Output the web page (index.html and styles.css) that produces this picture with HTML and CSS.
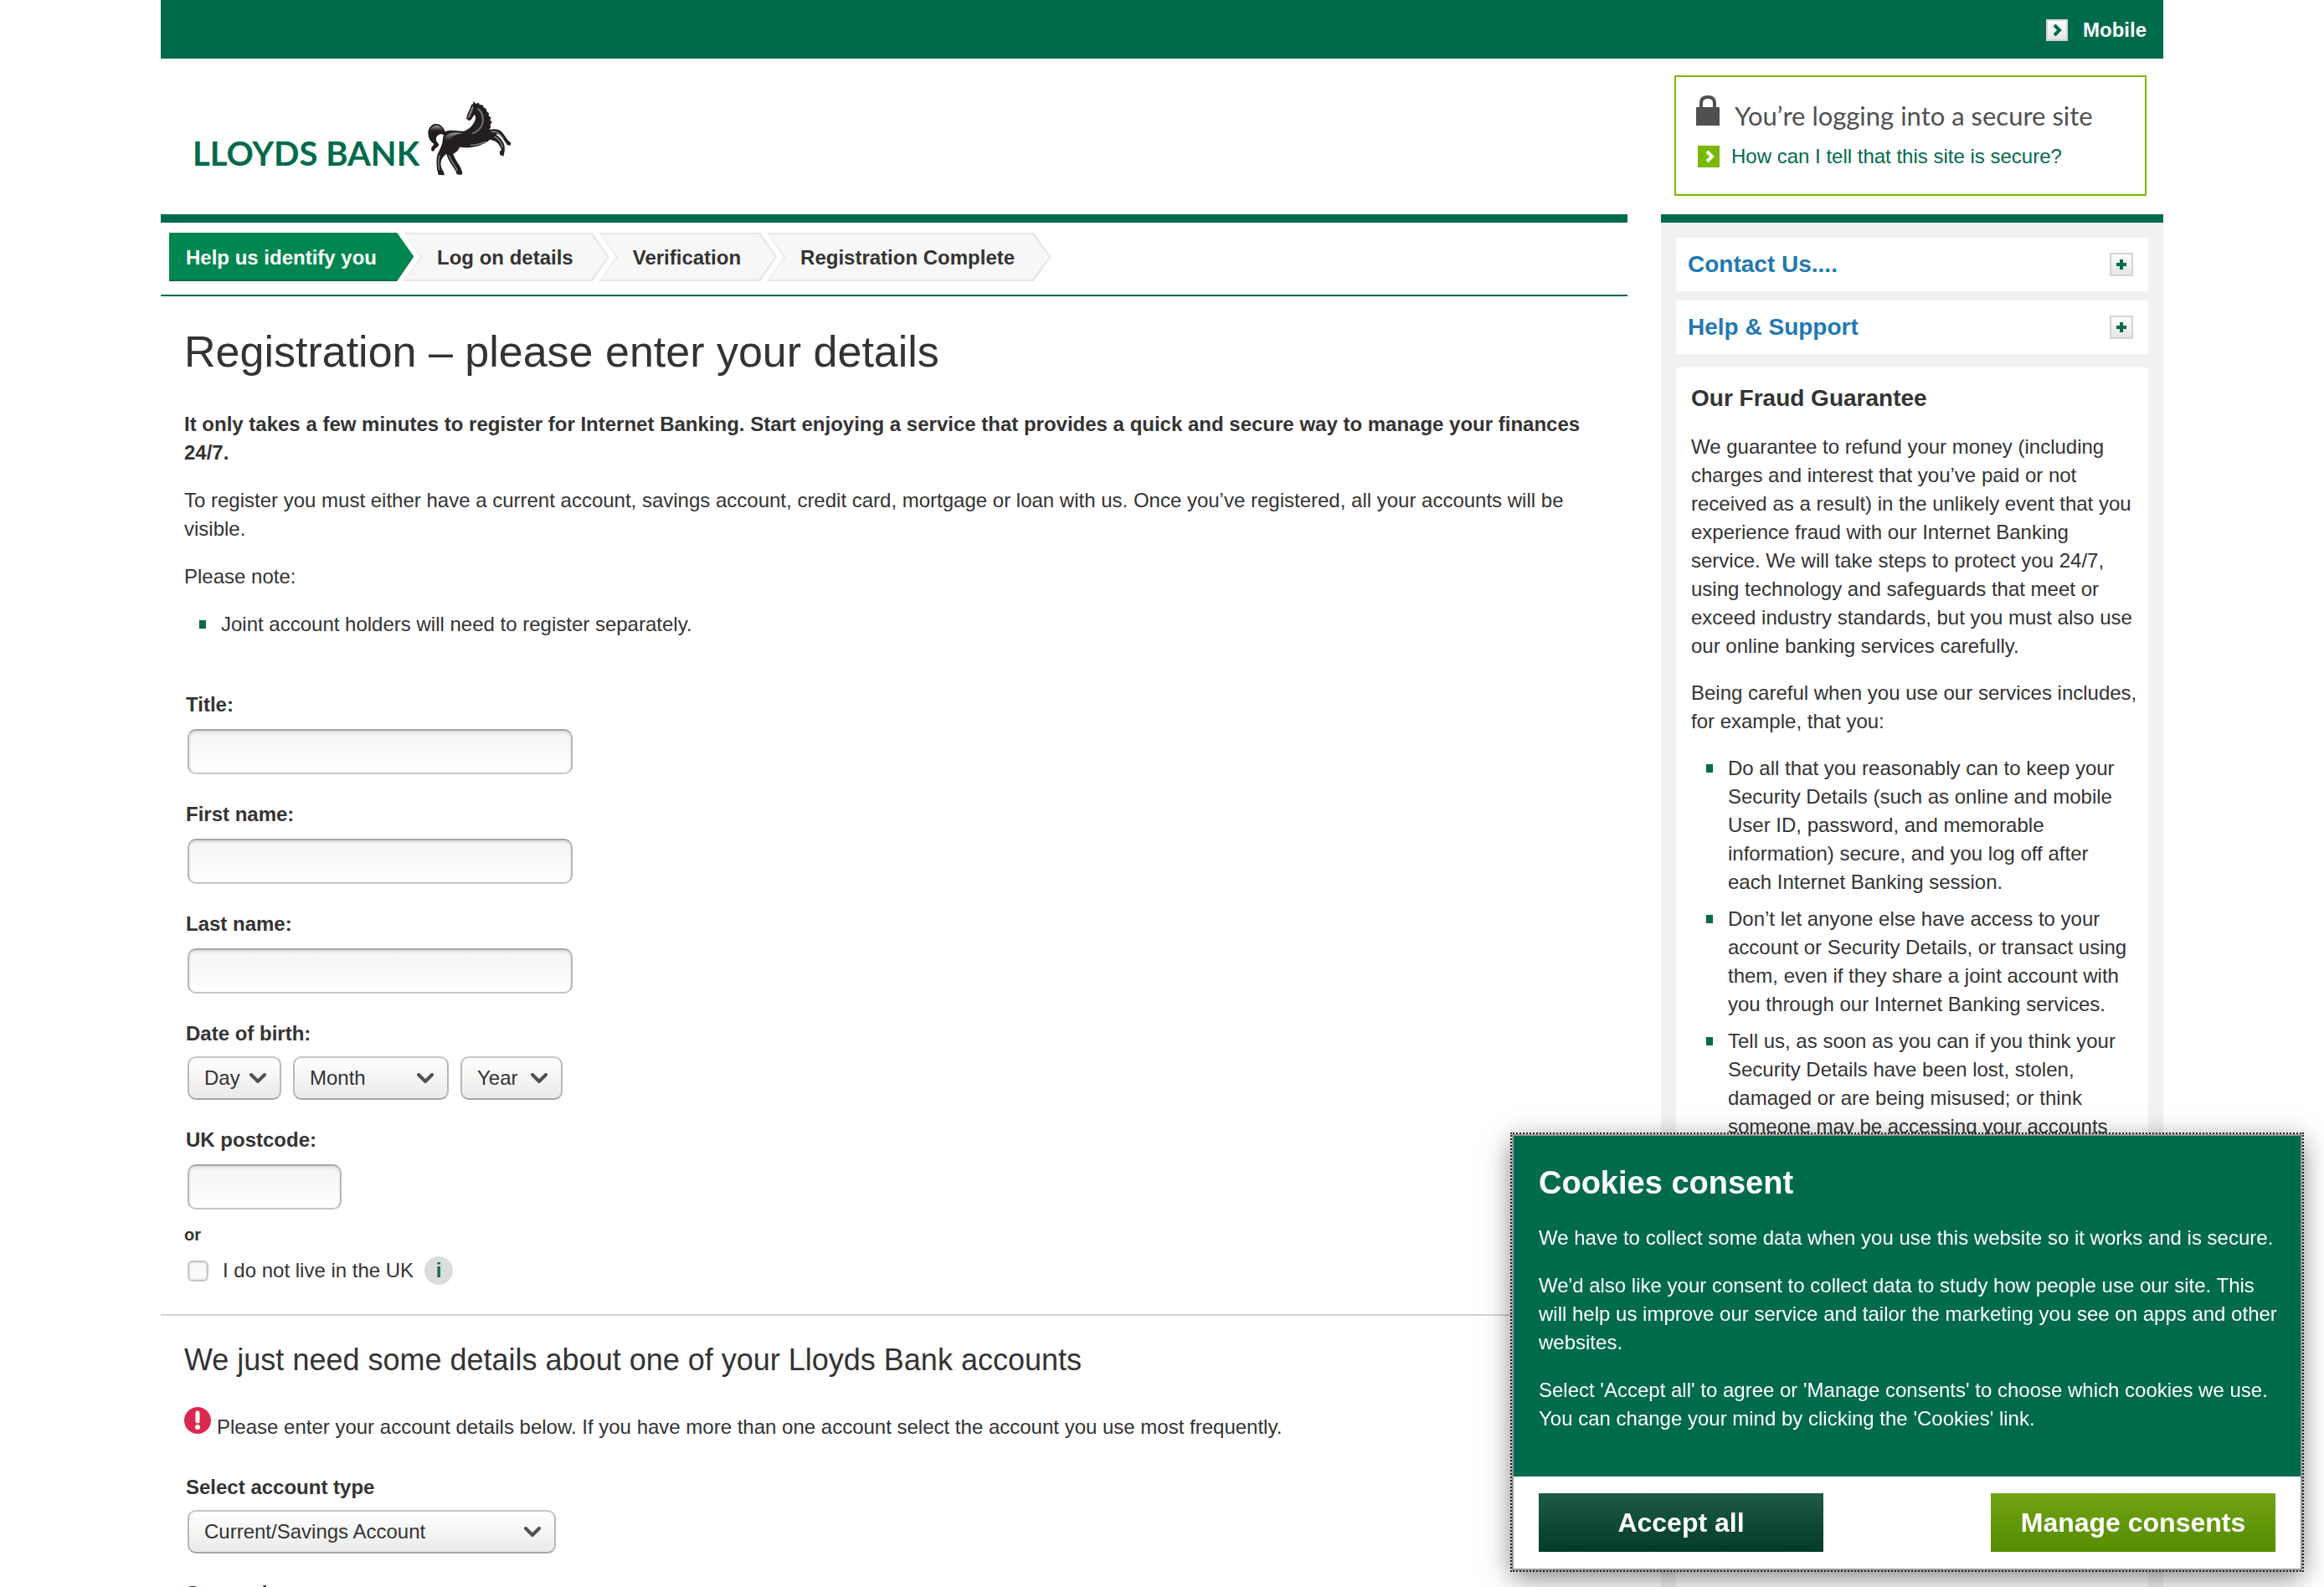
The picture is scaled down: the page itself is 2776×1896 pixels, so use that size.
FILE: index.html
```html
<!DOCTYPE html>
<html lang="en">
<head>
<meta charset="utf-8">
<title>Registration – Lloyds Bank</title>
<link rel="stylesheet" href="styles.css">
</head>
<body>
<div class="page">
  <nav class="topbar">
    <a class="topbar-link" href="#">
      <svg class="arrow-icon" viewBox="0 0 26 26" aria-hidden="true"><defs><linearGradient id="tile" x1="0" y1="0" x2="0" y2="1"><stop offset="0" stop-color="#fff"/><stop offset="1" stop-color="#e4e4e4"/></linearGradient></defs><rect x="1" y="1" width="24" height="24" fill="url(#tile)" stroke="#d4d4d4" stroke-width="2"/><path d="M10 7l6 6-6 6" fill="none" stroke="#006a4d" stroke-width="4"/></svg>
      <span>Mobile</span>
    </a>
  </nav>

  <header class="header">
    <a class="logo" href="#">
      <span class="logo-name">LLOYDS BANK</span>
      <svg class="logo-horse" viewBox="33 30 309 270" aria-hidden="true">
        <defs>
          <linearGradient id="sheen" x1="0" y1="0" x2="0" y2="1"><stop offset="0" stop-color="#aaa"/><stop offset="1" stop-color="#231f20" stop-opacity="0"/></linearGradient>
        </defs>
        <path fill="#231f20" d="M200 33L208 42L218 38L222 46L232 46L236 55L245 60L247 69L255 76L254 85L263 92L259 100L266 108L260 117L262 126L256 134C275 131 292 132 300 142C308 152 316 162 322 172L334 182L332 191L321 190L312 176C304 166 298 156 288 150L280 152C292 160 302 170 308 184C312 194 312 202 311 212L307 230L295 225L293 214L300 208C296 194 290 184 278 176L258 170C246 184 224 190 204 196C186 201 168 199 150 197C146 210 134 218 126 222C132 236 142 252 152 268L160 288L157 297L140 295L137 284L120 258C112 246 106 234 103 222C96 226 88 234 84 246C80 260 84 272 94 288L95 298L74 297L69 276C67 256 66 236 72 220C78 208 84 196 88 182C90 172 90 162 93 154C84 148 74 152 68 160C62 170 68 178 76 188C74 196 66 198 62 204L56 213L48 209L50 196C56 194 58 190 56 184C46 178 38 166 37 148C37 130 48 115 64 114C80 114 92 124 98 142C120 132 146 142 166 140C184 134 198 120 206 100C209 90 207 84 202 82L192 98L184 103L174 95L178 80L188 58L192 46L198 43Z"/>
        <path d="M42 146c2-18 12-26 26-26s20 9 24 22c-14-9-30-7-50 4z" fill="url(#sheen)"/>
        <path d="M98 160c10-14 36-18 66-12c-30 2-46 12-56 34c-8-4-12-12-10-22z" fill="url(#sheen)"/>
        <g fill="none" stroke="#8a8a8a" stroke-linecap="round">
          <path d="M197 54c-4 14-10 24-14 36" stroke-width="6"/>
          <path d="M216 60c16 12 22 34 14 58c-6 14-18 24-32 30" stroke-width="6" opacity=".8"/>
          <path d="M190 190c20 0 38-6 54-12" stroke-width="4"/>
          <path d="M78 228c-5 14-5 32 0 50M112 228c6 14 16 30 30 52" stroke-width="4"/>
          <path d="M264 142c18-2 28 4 42 24M276 160c14 8 24 20 28 38" stroke-width="4"/>
        </g>
      </svg>
    </a>
    <aside class="secure">
      <p class="secure-title">
        <svg class="lock-icon" viewBox="0 0 28 36" aria-hidden="true"><path d="M6 15V9q0-7 8-7t8 7v6" fill="none" stroke="#505050" stroke-width="4"/><rect y="14" width="28" height="22" fill="#505050"/></svg>
        <span>You’re logging into a secure site</span>
      </p>
      <a class="secure-link" href="#">
        <svg class="arrow-icon" viewBox="0 0 26 26" aria-hidden="true"><rect width="26" height="26" fill="#7ab800"/><path d="M11 7l6 6-6 6" fill="none" stroke="#fff" stroke-width="4"/></svg>
        <span>How can I tell that this site is secure?</span>
      </a>
    </aside>
  </header>

  <div class="columns">
    <main class="main">
      <ol class="steps">
        <li class="step step-current"><span>Help us identify you</span></li>
        <li class="step"><span>Log on details</span></li>
        <li class="step"><span>Verification</span></li>
        <li class="step"><span>Registration Complete</span></li>
      </ol>

      <section class="intro">
        <h1>Registration – please enter your details</h1>
        <p><strong>It only takes a few minutes to register for Internet Banking. Start enjoying a service that provides a quick and secure way to manage your finances 24/7.</strong></p>
        <p>To register you must either have a current account, savings account, credit card, mortgage or loan with us. Once you’ve registered, all your accounts will be visible.</p>
        <p>Please note:</p>
        <ul class="bullets"><li>Joint account holders will need to register separately.</li></ul>
      </section>

      <form>
        <section class="fields personal">
          <div class="field"><label for="title">Title:</label><input class="text-box" id="title" type="text"></div>
          <div class="field"><label for="first">First name:</label><input class="text-box" id="first" type="text"></div>
          <div class="field"><label for="last">Last name:</label><input class="text-box" id="last" type="text"></div>
          <div class="field field-select" role="group" aria-labelledby="dob">
            <label id="dob" for="day">Date of birth:</label>
            <div class="select-row">
              <select class="select select-day" id="day"><option>Day</option></select>
              <select class="select select-month" aria-label="Month"><option>Month</option></select>
              <select class="select select-year" aria-label="Year"><option>Year</option></select>
            </div>
          </div>
          <div class="field"><label for="postcode">UK postcode:</label><input class="text-box text-box-short" id="postcode" type="text"></div>
        </section>
        <p class="or">or</p>
        <div class="abroad">
          <input class="tick" id="abroad" type="checkbox">
          <label for="abroad">I do not live in the UK</label>
          <button class="info" type="button">i</button>
        </div>

        <section class="account">
          <h2>We just need some details about one of your Lloyds Bank accounts</h2>
          <p class="notice">
            <svg class="alert-icon" viewBox="0 0 32 32" aria-hidden="true"><circle cx="16" cy="16" r="16" fill="#dc2850"/><path d="M16 7v10" stroke="#fff" stroke-width="5" stroke-linecap="round"/><circle cx="16" cy="24" r="3" fill="#fff"/></svg>
            <span>Please enter your account details below. If you have more than one account select the account you use most frequently.</span>
          </p>
          <div class="fields">
            <div class="field field-select"><label for="type">Select account type</label><select class="select select-type" id="type"><option>Current/Savings Account</option></select></div>
            <div class="field"><label for="sort">Sort code:</label><input class="text-box text-box-short" id="sort" type="text"></div>
          </div>
        </section>
      </form>
    </main>

    <aside class="sidebar">
      <a class="panel-link" href="#"><span>Contact Us....</span>
        <svg class="plus-icon" viewBox="0 0 28 28" aria-hidden="true"><rect x="1" y="1" width="26" height="26" fill="url(#tile)" stroke="#d4d4d4" stroke-width="2"/><path d="M14 8v12M8 14h12" stroke="#006a4d" stroke-width="4"/></svg></a>
      <a class="panel-link" href="#"><span>Help &amp; Support</span>
        <svg class="plus-icon" viewBox="0 0 28 28" aria-hidden="true"><rect x="1" y="1" width="26" height="26" fill="url(#tile)" stroke="#d4d4d4" stroke-width="2"/><path d="M14 8v12M8 14h12" stroke="#006a4d" stroke-width="4"/></svg></a>
      <section class="guarantee">
        <h2>Our Fraud Guarantee</h2>
        <p>We guarantee to refund your money (including charges and interest that you’ve paid or not received as a result) in the unlikely event that you experience fraud with our Internet Banking service. We will take steps to protect you 24/7, using technology and safeguards that meet or exceed industry standards, but you must also use our online banking services carefully.</p>
        <p>Being careful when you use our services includes, for example, that you:</p>
        <ul class="bullets">
          <li>Do all that you reasonably can to keep your Security Details (such as online and mobile User ID, password, and memorable information) secure, and you log off after each Internet Banking session.</li>
          <li>Don’t let anyone else have access to your account or Security Details, or transact using them, even if they share a joint account with you through our Internet Banking services.</li>
          <li>Tell us, as soon as you can if you think your Security Details have been lost, stolen, damaged or are being misused; or think someone may be accessing your accounts</li>
        </ul>
      </section>
    </aside>
  </div>
</div>

<section class="cookies" role="dialog" aria-labelledby="cookies-title">
  <div class="cookies-text">
    <h2 id="cookies-title">Cookies consent</h2>
    <p>We have to collect some data when you use this website so it works and is secure.</p>
    <p>We'd also like your consent to collect data to study how people use our site. This will help us improve our service and tailor the marketing you see on apps and other websites.</p>
    <p>Select 'Accept all' to agree or 'Manage consents' to choose which cookies we use. You can change your mind by clicking the 'Cookies' link.</p>
  </div>
  <div class="cookies-actions">
    <button class="button button-dark" type="button">Accept all</button>
    <button class="button button-lime" type="button">Manage consents</button>
  </div>
</section>
</body>
</html>
```
FILE: styles.css
```css
* { box-sizing: border-box; }

body {
  margin: 0;
  background: #fff;
  color: #333;
  font: 24px/34px "Liberation Sans", Arial, sans-serif;
}

h1, h2, p, ul, ol { margin: 0; padding: 0; font-weight: normal; }
ul, ol { list-style: none; }
a { color: inherit; text-decoration: none; }
svg { display: block; flex: none; }
input, select, button { font: inherit; color: inherit; margin: 0; }

.page { padding: 0 192px; }

/* Top bar and header */
.topbar {
  display: flex;
  justify-content: flex-end;
  align-items: center;
  height: 70px;
  padding: 2px 20px 0 0;
  background: #006a4d;
  color: #fff;
  font-weight: bold;
}
.topbar-link { display: flex; align-items: center; gap: 18px; }
.arrow-icon { width: 26px; height: 26px; }

.header {
  display: flex;
  justify-content: space-between;
  align-items: flex-start;
  padding: 20px 20px 22px 38px;
}
.logo { display: flex; align-items: flex-end; gap: 9px; padding-top: 30px; }
.logo-name { color: #006a4d; font: bold 40px/54px Lato, sans-serif; }
.logo-horse { width: 103px; height: 90px; }

.secure {
  width: 564px;
  height: 144px;
  padding: 22px 24px;
  border: 2px solid #7ab800;
}
.secure-title {
  display: flex;
  gap: 18px;
  color: #505050;
  font: 31px/48px Lato, sans-serif;
}
.lock-icon { width: 28px; height: 36px; }
.secure-link { display: flex; align-items: center; gap: 14px; padding: 8px 0 0 2px; color: #006a4d; line-height: 34px; }
.secure-title, .secure-link { white-space: nowrap; }

/* Two columns */
.columns { display: grid; grid-template-columns: minmax(0, 1fr) 600px; gap: 40px; }
.main, .sidebar { border-top: 10px solid #006a4d; }
.main { padding-bottom: 40px; }

.steps {
  display: flex;
  padding: 12px 10px 16px;
  border-bottom: 2px solid #006a4d;
  font-weight: bold;
}
.step {
  position: relative;
  margin-left: -12px;
  padding: 2px 43px 0 40px;
  line-height: 56px;
}
.step::before, .step::after {
  content: "";
  position: absolute;
  inset: 0;
  background: #e6e6e6;
  clip-path: polygon(0 0, calc(100% - 20px) 0, 100% 50%, calc(100% - 20px) 100%, 0 100%, 20px 50%);
}
.step::after {
  inset: 2px;
  background: #f7f7f7;
}
.step span { position: relative; z-index: 1; }
.step-current { margin-left: 0; padding-left: 20px; padding-right: 44px; color: #fff; }
.step-current::before, .step-current::after {
  background: #006a4d;
  clip-path: polygon(0 0, calc(100% - 20px) 0, 100% 50%, calc(100% - 20px) 100%, 0 100%);
}
.step-current::after { inset: 0 0 2px; background: #008750; }

.intro { padding: 36px 28px 0; }
.intro h1 { margin-bottom: 40px; font-size: 52px; line-height: 60px; }
.intro p { margin-bottom: 23px; }

.bullets li { position: relative; padding-left: 44px; }
.bullets li::before {
  content: "";
  position: absolute;
  left: 18px;
  top: 12px;
  width: 8px;
  height: 10px;
  background: #006a4d;
}

/* Form */
.fields { display: grid; gap: 31px; }
.personal { padding: 62px 30px 0; }
.field { display: flex; flex-direction: column; gap: 12px; }
.field-select { gap: 10px; }
.field label { font-weight: bold; }
.text-box, .select { margin-left: 2px; border: 2px solid #b8b8b8; border-radius: 10px; }
.text-box {
  width: 460px;
  height: 54px;
  padding: 0 16px;
  border-color: #a6a6a6 #b8b8b8 #c6c6c6;
  background: linear-gradient(#f4f4f4, #fff);
  box-shadow: inset 0 2px 3px #dcdcdc;
}
.text-box-short { width: 184px; }
.select-row { display: flex; gap: 12px; }
.select {
  appearance: none;
  height: 52px;
  padding: 0 0 0 18px;
  border-color: #c6c6c6 #b8b8b8 #a6a6a6;
  background: url("data:image/svg+xml,%3Csvg xmlns='http://www.w3.org/2000/svg' width='20' height='12'%3E%3Cpath d='M2 2l8 8 8-8' fill='none' stroke='%23505050' stroke-width='4' stroke-linecap='round'/%3E%3C/svg%3E") no-repeat right 16px center, linear-gradient(#fff, #ebeae9);
}
.select-day { width: 112px; }
.select-month { width: 186px; }
.select-year { width: 122px; }
.select-type { width: 440px; }

.or { padding: 16px 28px 12px; font-size: 20px; line-height: 28px; font-weight: bold; }
.abroad { display: flex; align-items: center; padding: 0 32px; }
.tick {
  appearance: none;
  width: 25px;
  height: 25px;
  margin-right: 17px;
  border: 2px solid #c6c6c6;
  border-radius: 6px;
  background: #fafafa;
  box-shadow: inset 0 0 3px #ccc;
}
.info {
  width: 34px;
  height: 34px;
  margin-left: 13px;
  padding: 0;
  border: 0;
  border-radius: 50%;
  background: #dcdcdc;
  color: #006a4d;
  font-weight: bold;
}

.account { margin-top: 35px; padding: 31px 28px 0; border-top: 2px solid #d4d4d4; }
.account h2 { margin-bottom: 34px; font-size: 36px; line-height: 44px; }
.notice { display: flex; align-items: baseline; gap: 7px; margin-bottom: 38px; }
.alert-icon { width: 32px; height: 32px; }
.account .fields { padding-left: 2px; }

/* Sidebar */
.sidebar { display: flex; flex-direction: column; padding: 18px 18px 0; background: #f1f1f1; }
.panel-link {
  display: flex;
  justify-content: space-between;
  align-items: center;
  height: 64px;
  margin-bottom: 11px;
  padding: 0 18px 0 14px;
  background: #fff;
  color: #1f78b4;
  font-size: 28px;
  font-weight: bold;
}
.plus-icon { width: 28px; height: 28px; }
.guarantee { flex: 1; margin-top: 5px; padding: 20px 10px 0 18px; background: #fff; }
.guarantee h2 { margin-bottom: 24px; font-size: 28px; font-weight: bold; }
.guarantee p { margin-bottom: 22px; }
.guarantee li { margin-bottom: 10px; padding-right: 10px; }

/* Cookie dialog */
.cookies {
  position: fixed;
  right: 26px;
  bottom: 20px;
  width: 944px;
  border: 2px solid #999;
  outline: 2px dotted #222;
  background: #fff;
  box-shadow: 0 8px 30px rgba(0, 0, 0, 0.5);
}
.cookies-text { padding: 34px 24px 29px 30px; background: #006a4d; color: #fff; }
.cookies-text h2 { margin-bottom: 27px; font-size: 38px; line-height: 44px; font-weight: bold; }
.cookies-text p { margin-bottom: 23px; }
.cookies-actions { display: flex; justify-content: space-between; padding: 20px 30px; }
.button {
  width: 340px;
  height: 70px;
  padding: 0;
  border: 0;
  color: #fff;
  font-size: 32px;
  font-weight: bold;
}
.button-dark { background: linear-gradient(#1e5b46, #033b29); }
.button-lime { background: linear-gradient(#70a415, #578b00); }
```
